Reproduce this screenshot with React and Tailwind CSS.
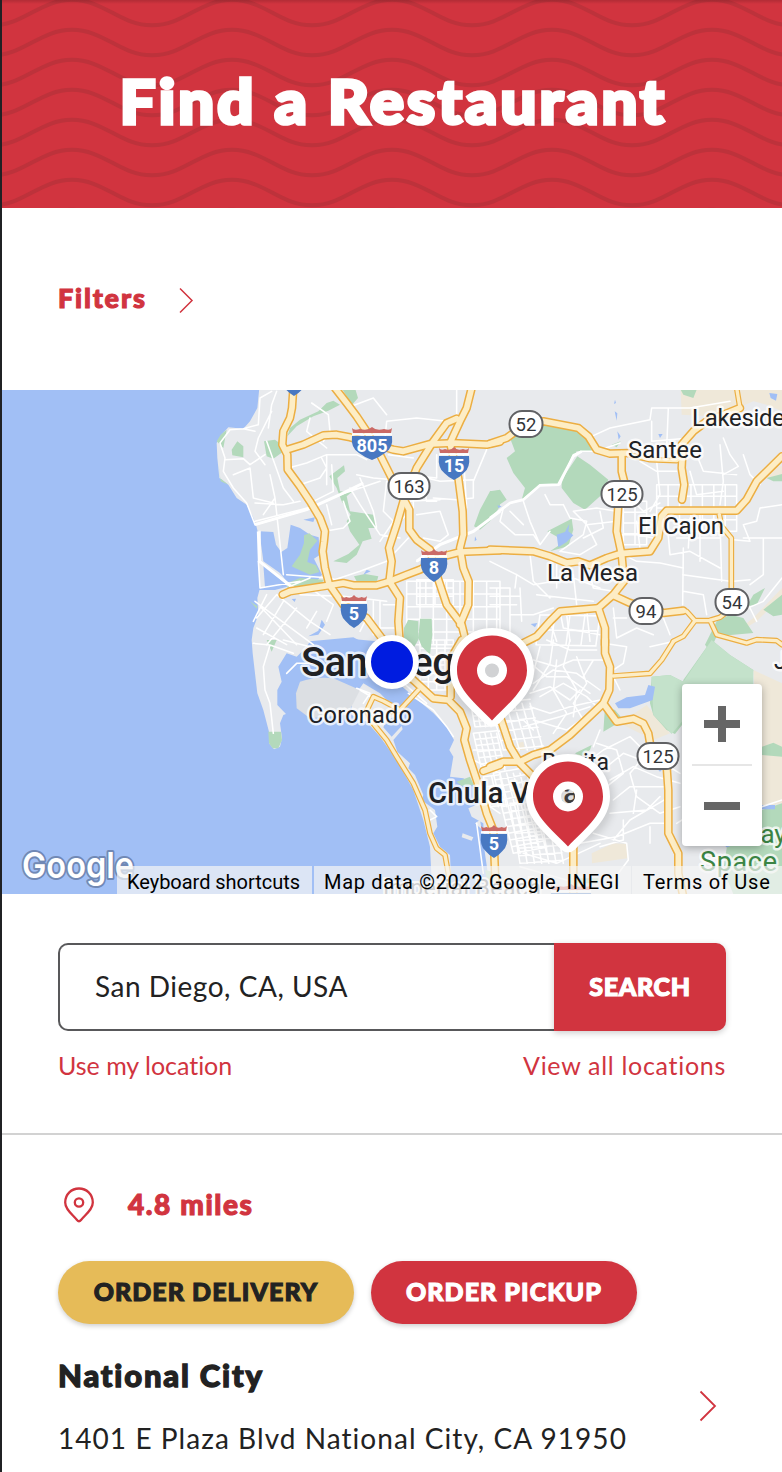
import React from 'react';

// The map is drawn in four quadrants, each one in its own coordinate space.
const Q = {
  A: 'translate(200 388) scale(.33333)',
  B: 'translate(490 388) scale(.33333)',
  C: 'translate(200 640) scale(.33333)',
  D: 'translate(490 640) scale(.33333)',
};

const grid = (x0, y0, x1, y1, nx, ny, skew = 0) => {
  let d = '';
  for (let i = 0; i <= nx; i++) {
    const x = x0 + ((x1 - x0) * i) / nx;
    d += `M${x} ${y0}L${x + skew} ${y1}`;
  }
  for (let j = 0; j <= ny; j++) {
    const y = y0 + ((y1 - y0) * j) / ny;
    const s = (skew * j) / ny;
    d += `M${x0 + s} ${y}L${x1 + s} ${y - skew * 0.3}`;
  }
  return d;
};

const parks = [
  ['A', 'M270 120L300 95 355 70 380 45 400 38 420 50 385 68 340 85 290 115 262 145ZM425 0H465L474 30 455 52ZM95 185L112 160 130 175 130 208 97 202ZM192 160L225 155 262 182 220 212 200 205ZM388 265L432 232 435 250 412 270 420 310 455 312 440 325 450 370 520 380 532 420 505 420 515 452 488 460 470 500 440 525 400 520 445 498 478 470 450 430 440 400 452 380 425 340 410 300ZM870 310L900 308V355L870 400 840 425 822 415 840 365ZM462 565L495 558 535 565 530 582 470 580ZM50 160L62 140 80 125 70 180ZM55 225L62 280 85 290 60 270Z'],
  ['B', 'M60 150L130 108 260 120 300 165 330 190 260 190 205 290 150 290 95 335 105 300 70 255 50 210 75 190ZM215 275L262 205 300 230 355 275 335 320 285 365 250 345 215 300ZM0 310L30 305 50 335 0 370ZM172 430L245 392 250 425 235 475 180 490 225 460ZM572 5H620L610 30 580 20ZM365 170L392 160 380 178ZM830 270L876 258V280L850 280ZM825 600L800 650 770 655 790 620ZM820 665L876 620V680L850 685ZM680 700L720 680 760 690 790 735 680 745 660 790 645 770Z'],
  ['C', 'M205 275H243L246 300 235 325 218 325 207 310ZM770 425L810 410 822 435 785 438ZM855 690L900 700V740H865ZM200 0H230L215 35ZM160 95L170 150 163 110Z'],
  ['D', 'M485 110L540 105 580 125V250L555 282 530 270 490 225 480 190ZM580 120L665 0 720 45 790 90 780 140 580 150ZM816 320L850 308 876 320V350L816 345ZM720 560L816 510 876 490V762H730L700 690ZM345 200L375 210 400 240 340 275ZM255 340L305 315 300 330 270 350ZM240 715H325V730H240Z'],
];
const balboa = [
  ['A', 'M612 720L625 695 655 700 655 755 635 790 612 790ZM660 692H695L697 740 690 800 665 775 655 750Z'],
];
const sand = [
  ['B', 'M572 5H876V70L830 50 790 40 720 70 660 85 575 80ZM820 240L876 235V260L830 270ZM700 760L790 690 876 600V625L800 700Z'],
  ['D', 'M790 90L876 130V490L816 500ZM390 250L470 195 540 280 490 300ZM305 640L370 610 412 612V655L306 670ZM80 310L100 305 105 330 80 330Z'],
];
const water = [
  ['A', 'M178 430L220 432 228 470 244 492 262 480 272 410 300 420 330 440 356 448 360 500 342 512 366 560 350 580 262 582 240 555 190 520ZM190 530L245 568 262 596 225 606 195 598ZM310 395L345 388 340 402ZM155 598H225V606H155ZM365 695L375 710 355 740 325 745 355 728ZM825 445L830 455 824 460ZM500 545L512 550 490 560ZM275 633L288 632 284 642ZM320 780L340 765 450 752 530 760 550 790H320Z'],
  ['B', 'M375 35L378 45 372 48ZM374 70L382 76 380 98ZM382 130L392 145 386 155ZM505 138H518L510 150ZM838 15L862 18 858 38 842 30ZM238 408L235 430 250 442 230 462 205 478 200 440 225 432ZM122 708L142 705 135 718ZM22 352L35 355 26 360Z'],
  ['D', 'M375 190L410 172 465 165 475 135 495 140 488 180 420 205 385 205ZM816 495H855V508H816ZM705 612L720 620 708 622ZM500 385L518 388 510 395Z'],
];

const minor = [
  ['A', 'M130 122L90 125 60 165 75 210 70 250 100 300 140 345 165 410M75 215L130 212 150 230 195 200M165 130L130 122 175 110 180 30 215 10M215 70L175 150 165 190 195 230M230 10L215 50 205 120M335 45L385 80 390 130 370 160M100 260L150 240 160 330 220 345M165 410L320 365 420 320 540 280M165 400L330 358M165 345L250 350 300 340M210 260L225 330 190 380M225 330L250 560M180 430V520L270 595 330 570M175 520L180 600M420 320L470 300M440 60L520 30 560 80M265 240L320 225 380 200 470 200 500 215M300 290L360 270 380 240 365 210M340 340L400 310 395 230M375 430L430 420 450 400 430 340M380 350L395 410M450 300L480 350 540 440 600 450M470 260L520 270 580 275M550 200L560 100 650 90 740 100M560 280L550 370 580 400 540 460M640 260L720 280 820 275M670 280L680 340 710 340M860 185L820 280V330L770 335 700 330M620 340L720 335M650 380L720 370 745 440 720 460 670 450M625 450L560 520 480 550 390 580M650 520L720 470 820 430 900 370M770 0V120M710 200V270L660 265M790 200L800 360M480 270L520 370 530 420M565 200L640 210M380 200V290M330 90L320 130 380 180M200 160L250 300 280 340M640 300V360L600 400M260 560L390 570 480 600M180 600L300 580'],
  ['A', 'M170 690L230 620 330 700 390 740M165 640L340 770M200 620L160 700M250 640L190 740M290 660L200 770M300 620L430 625 560 640M330 600L400 650 380 700M520 640V740M540 640V720L600 720M550 650H600M470 650L500 690 480 730M170 720L260 770M180 655L290 770M350 670L320 720'],
  ['A', grid(620, 580, 900, 770, 7, 5, 0) + grid(650, 575, 760, 650, 4, 3)],
  ['B', 'M0 390L60 345 100 335 150 292 210 290 250 200 275 190 320 190 390 165M305 145L360 120 480 95 485 60 600 60 720 40M485 100V160L600 150M535 60L530 180M500 220L510 320 480 370M450 220L500 250 560 250M600 250L620 320 700 310M700 150L720 200 745 235 700 260M690 170L700 280 690 350M620 200L640 250 740 260M760 200L780 260 810 290M430 340L460 370 510 345M380 370L320 360 250 370 290 410 380 400M220 350L240 390 290 400 280 440 210 490M165 320L180 350 220 350M100 340L120 400 150 470 180 430M40 360L30 400 75 440 130 440 150 470M60 370L100 410M290 410L320 470 270 500 210 490M330 370L340 420 280 450M380 440H440L490 450M440 400L450 480M400 500L440 520 510 525 580 540M530 390L540 500 600 490 690 540M560 450H690M630 380V520M690 390L695 580M600 390L595 480M760 450H876M820 450V560L780 590M876 350L810 360 800 400 760 410 780 460 730 455M730 580L780 575M580 480L578 650M578 560L720 580M580 610L640 620 650 680M0 600H60V760M0 625H90M0 650H80M20 600V760M60 680L130 680 190 660M90 600L95 700M80 560L130 590 250 570 330 600M0 520L80 560 75 600M120 500L130 580 180 630M200 530L200 600M250 560L260 650M140 620L310 640M300 560L310 600 370 610M180 700L200 760M230 680L240 760M210 670L220 720 330 740M290 665L300 760M370 660L380 750 440 720 490 740M370 690H410M520 690L540 740M876 570L820 640 750 670M780 660L800 700'],
  ['B', grid(500, 290, 740, 430, 7, 4) + grid(400, 340, 470, 470, 2, 4) + grid(150, 680, 330, 770, 4, 2, -12)],
  ['C', 'M160 10L210 15 190 80 195 150 210 190 220 280M210 15L280 40M260 100L290 70 340 70M250 0L330 20M470 145L510 160 490 190M480 150L530 180M690 510L710 530 690 540M625 160L700 210 740 260 760 290M600 120L680 190M820 330H900M820 200H900M760 40H830M830 550L850 700M680 60L760 60M640 60V110M820 360L900 400M870 440V500L900 520'],
  ['C', grid(660, 0, 760, 150, 4, 6) + grid(810, 180, 890, 260, 5, 5, 15) + grid(820, 280, 890, 390, 4, 6, 25) + grid(850, 410, 900, 500, 2, 3, 20)],
  ['D', 'M150 20L130 100 90 180M190 0L180 70 130 150M240 0L220 80 260 150 250 230M110 60L170 110 230 110 300 160M120 160L180 140 240 180 270 150M100 260L210 230 300 200M20 250L100 240 130 270'],
  ['D', grid(0, 190, 120, 330, 5, 5, 40) + grid(10, 400, 110, 640, 5, 12, 60) + grid(60, 490, 190, 670, 6, 8, 30)],
  ['D', 'M130 130L190 90 260 100 330 150M150 170L220 130 290 170 320 200M120 200L180 220 240 200 330 180M130 60L200 80 250 60 340 60M170 0L240 30 320 30M200 60L190 150 230 220 190 280M260 50L290 130 250 190 280 240M310 60L280 110M130 240L230 270 300 220M340 10L410 20 400 70 370 90M370 110L390 150M480 20L570 0M300 360L340 330 420 290 470 340 420 400 440 470 510 520 570 500M330 270L310 320M350 380L400 340 480 370M360 420L430 380 500 410 570 430M370 480L420 440 530 440M370 600L420 540 540 470M270 610L380 590 480 550 540 550M400 540V600L330 620M310 580L410 610 415 660 370 720M430 520L440 450M470 340L570 400M480 560V610M360 520L470 510 510 470M320 310L380 330 400 400 350 440M100 640L200 670 330 610M90 680L230 720M816 500L876 480M560 550L576 540'],
];

const highways = [
  ['A', 'M280 0L276 60 270 90 250 130 247 170 262 200 263 245 300 295 330 340 360 390 375 430 372 460 368 490 375 540 388 590 430 650 500 690 545 750 590 800'],
  ['A', 'M405 0L440 45 470 85 500 130 540 200 580 280 612 335 628 365 628 425 650 455 690 485 710 560 740 650 785 710 800 770'],
  ['A', 'M815 0L800 60 780 100 750 165 775 270 788 370 790 440 780 480 790 540 806 580 805 650 780 710'],
  ['A', 'M770 92L740 105 700 160 650 240 610 340 590 410 567 480 575 520 568 580 600 630 595 700 600 770'],
  ['A', 'M262 185L310 170 370 142 410 140 450 148 530 170 580 185 610 190 690 168 760 165 860 170 900 161'],
  ['A', 'M248 620L270 610 388 592 430 585 460 592 530 592 570 580 620 560 660 545 730 505 780 492 900 487'],
  ['B', 'M0 167L50 150 110 106 160 100 265 120 295 145 320 185 360 197 415 195'],
  ['B', 'M395 197L395 250 405 290 385 350 380 430 395 500 402 580 370 620 325 660 345 720V770'],
  ['B', 'M578 180L575 240 583 290 576 335'],
  ['B', 'M575 170L610 130 650 100 700 80 750 60'],
  ['B', 'M0 485L130 490 180 505 230 525 265 520 300 532 350 510 390 497 480 490 505 450 515 385 530 368 740 368 770 335 800 280 876 205'],
  ['B', 'M370 622L420 645 520 675 580 668'],
  ['B', 'M325 660L210 670 180 700 140 745 80 775'],
  ['C', 'M590 80L640 120 700 175 745 180 780 215 800 265 793 300 810 360 840 450 860 520 880 570 888 770'],
  ['C', 'M752 170V110L750 60 785 0'],
  ['C', 'M850 393L900 375'],
  ['D', 'M0 380L40 365 90 365 130 345 180 330 240 285 340 190'],
  ['D', 'M345 0V40L360 80 358 150 340 190 380 245 430 236 460 250 475 280 485 340'],
  ['D', 'M530 380L535 450 535 580 565 640 565 700 580 770'],
  ['D', 'M30 230L60 320 90 370 130 410 200 500 250 590V770'],
];
const arterials = [
  ['B', 'M415 200L480 215 560 218 575 208M750 60L740 0M688 380L695 415 724 450V620'],
  ['B', 'M575 665L590 670 615 698 660 697 690 688 720 665M660 697L680 740 770 765 800 755 860 758 876 770M615 698L580 745 550 760'],
  ['C', 'M655 150L600 210 575 215M600 210L550 183 520 170 500 212 515 245 560 300 590 350 640 430 675 510 690 580 710 625 735 645 745 700V770'],
  ['D', 'M550 5L515 60 480 100 370 108'],
];

const mapLabels = [
  ['Lakeside', 692, 426, 24, 400, 93], ['Santee', 628, 458, 24, 400, 74],
  ['El Cajon', 638, 534, 24, 400, 86], ['La Mesa', 547, 581, 24, 400, 91],
  ['Coronado', 308, 723, 23.5, 400, 104], ['San Diego', 301, 676, 40, 500, 176],
  ['Bonita', 542, 770, 23, 400, 67], ['Chula Vista', 428, 803, 29, 500, 151],
  ['J', 774, 669, 23, 400, null],
];
const ovals = [['52', 526, 424, 33], ['163', 409, 486, 41], ['125', 622, 494, 41], ['94', 646, 611, 33], ['54', 732, 602, 33], ['125', 658, 756, 41]];
const shields = [['', 294, 380, 26], ['805', 372, 444, 40], ['15', 454, 464, 30], ['8', 434, 566, 26], ['5', 354, 612, 26], ['5', 494, 842, 26], ['125', 571, 901, 40]];

const Layer = ({ items, ...rest }) => (
  <g {...rest}>
    {items.map(([q, d], i) => <path key={i} transform={Q[q]} d={d} />)}
  </g>
);

const Shield = ({ t, x, y, w }) => {
  const h = w / 2;
  return (
    <g transform={`translate(${x} ${y})`}>
      <path d={`M${-h + 1}-11L${-h}-16Q${-h + 2}-13 ${-h * 0.6}-15Q${-h * 0.2}-13 0-17Q${h * 0.2}-13 ${h * 0.6}-15Q${h - 2}-13 ${h}-16L${h - 1}-11Z`} fill="#cb6a66" />
      <path d={`M${-h}-8H${h}Q${h + 1.5} 4 ${h * 0.65} 9Q${h * 0.4} 13 0 16Q${-h * 0.4} 13 ${-h * 0.65} 9Q${-h - 1.5} 4 ${-h}-8Z`} fill="#4878c2" />
      <path d={`M${-h} -9.7H${h}`} stroke="#fff" strokeWidth="2.2" />
      <text y="8" textAnchor="middle" fontSize="18" fontWeight="700" fill="#fff">{t}</text>
    </g>
  );
};

const Pin = ({ x, y }) => (
  <g transform={`translate(${x} ${y})`}>
    <circle cy="3" r="40" fill="none" stroke="#000" strokeWidth="10" opacity=".14" filter="url(#soft)" />
    <path fillRule="evenodd" fill="#fff" d="M0-42.500C24-42.500 42-24 42 0C42 23 22 37 7 53Q0 59-7 53C-22 37-42 23-42 0C-42-24-24-42.500 0-42.500ZM0-7A7 7 0 0 0 0 7A7 7 0 0 0 0-7Z" />
    <path fillRule="evenodd" fill="#d1343f" d="M0-35C20-35 35-20 35 0C35 19 16 33 0 50C-16 33-35 19-35 0C-35-20-20-35 0-35ZM0-15A15 15 0 0 0 0 15A15 15 0 0 0 0-15Z" />
    <circle r="7" fill="#8a8a8a" opacity=".25" />
  </g>
);

function RestaurantMap() {
  return (
    <svg className="block h-[504px] w-[780px] font-[Roboto,sans-serif]" viewBox="2 390 780 504" role="img" aria-label="Map of San Diego">
      <defs>
        <filter id="soft" x="-30%" y="-30%" width="160%" height="160%"><feGaussianBlur stdDeviation="4" /></filter>
      </defs>
      <rect x="0" y="388" width="784" height="508" fill="#a1bff5" />
      <path
        transform={Q.A}
        fill="#e8eaed"
        d="M178 0L172 60 150 100 130 122 85 118 65 140 50 165 52 210 58 270 85 290 110 330 140 350 158 385 168 410 178 450 175 520 180 600 172 630 175 680 160 720 155 756 158 796 165 856 172 916 190 966 207 1031 207 1066 222 1084 240 1076 246 1051 240 1006 250 981 258 978 232 951 232 906 245 881 235 836 260 796 290 806 320 776 330 760 460 748 520 780 550 826 600 890 640 925 700 975 740 1016 762 1056 748 1086 760 1106 750 1166 790 1171 830 1196 840 1246 805 1261 815 1286 850 1306 852 1376 862 1446 870 1530H1760V0Z"
      />
      <path transform={Q.C} fill="#e8eaed" d="M455 180L490 130 540 160 575 195 605 222 560 240 550 262 575 290 605 258 608 268 580 300 592 335 630 370 625 385 645 405 670 465 665 480 705 510 712 560 700 580 720 620 750 645 755 762H697L690 620 670 540 640 450 590 360 540 290 500 245 455 225ZM788 580L820 592 815 602 785 592ZM825 550L840 540 845 568Z" />
      <path transform={Q.C} fill="#dcdfe3" d="M300 125Q350 108 400 115L480 150 460 190 440 225 330 235 290 205 288 160Z" />
      <Layer items={sand} fill="#efe8d9" />
      <Layer items={parks} fill="#b3d9bb" />
      <path transform={Q.D} d="M485 110L540 105 580 125 665 0 720 45 790 90V140H580V240L545 282 490 225Z" fill="#c4e2cb" />
      <Layer items={water} fill="#a1bff5" />
      <path transform={Q.A} fill="#b3d9bb" d="M312 442L328 436 352 458 330 485 322 522 348 532 358 552 330 560 285 540 275 535 300 500 312 465ZM262 586L300 570 372 575 360 592 262 600ZM150 640L172 655 170 662Z" />
      <Layer items={minor} fill="none" stroke="#fff" strokeWidth="4.600" strokeLinejoin="round" strokeLinecap="round" />
      <Layer items={balboa} fill="#b3d9bb" />
      <path transform={Q.A} fill="none" stroke="#fff" strokeWidth="9" d="M165 410L320 365 420 320 490 285M175 430L178 520 280 600M650 520L720 470 820 430 900 370" />
      <path transform={Q.B} fill="none" stroke="#fff" strokeWidth="8" d="M0 390L60 345 100 335 150 292 205 290 250 205 275 190" />
      <Layer items={arterials} fill="none" stroke="#ecae42" strokeWidth="17" strokeLinejoin="round" strokeLinecap="round" />
      <Layer items={highways} fill="none" stroke="#ecae42" strokeWidth="26" strokeLinejoin="round" strokeLinecap="round" />
      <Layer items={arterials} fill="none" stroke="#fdedc5" strokeWidth="10" strokeLinejoin="round" strokeLinecap="round" />
      <Layer items={highways} fill="none" stroke="#fdedc5" strokeWidth="17" strokeLinejoin="round" strokeLinecap="round" />
      {shields.map(([t, x, y, w], i) => <Shield key={i} t={t} x={x} y={y} w={w} />)}
      {ovals.map(([t, x, y, w], i) => (
        <g key={i}>
          <rect x={x - w / 2} y={y - 13} width={w} height="26" rx="12.5" fill="#fff" stroke="#606164" strokeWidth="2" />
          <text x={x} y={y + 6.5} textAnchor="middle" fontSize="18.5" fill="#333538">{t}</text>
        </g>
      ))}
      {mapLabels.map(([t, x, y, s, w, len]) => (
        <text key={t} x={x} y={y} fontSize={s} fontWeight={w} textLength={len || undefined} fill="#202124" stroke="#fff" strokeOpacity=".75" strokeWidth="5" strokeLinejoin="round" paintOrder="stroke">{t}</text>
      ))}
      <g fontSize="26" fill="#3b8444" stroke="#fff" strokeOpacity=".75" strokeWidth="5" strokeLinejoin="round" paintOrder="stroke">
        <text x="734" y="843">Otay</text>
        <text x="700" y="871" fontSize="27" textLength="77">Space</text>
      </g>
      <text x="383" y="896" fontSize="23" fill="#74777b" stroke="#fff" strokeWidth="4" paintOrder="stroke" textLength="158">Imperial Beach</text>
      <Pin x={492} y={670.5} />
      <Pin x={568} y={796.5} />
      <circle cx="392" cy="664" r="28" fill="#000" opacity=".16" filter="url(#soft)" />
      <circle cx="392" cy="662" r="24" fill="#001ce0" stroke="#fff" strokeWidth="6" />
      <text x="22" y="878" className="font-[Inter,sans-serif]" fontSize="36" fontWeight="600" fill="#fff" stroke="#7189b5" strokeWidth="4" strokeLinejoin="round" paintOrder="stroke" textLength="112" lengthAdjust="spacingAndGlyphs">Google</text>
    </svg>
  );
}

const Waves = () => (
  <svg className="absolute inset-0 h-full w-full" aria-hidden="true">
    {Array.from({ length: 8 }, (_, i) => (
      <path key={i} transform={`translate(-90 ${i * 30 - 0.2})`} d="M0 0c32 0 48 25.500 80 25.500s48-25.500 80-25.500s48 25.500 80 25.500s48-25.500 80-25.500s48 25.500 80 25.500s48-25.500 80-25.500s48 25.500 80 25.500s48-25.500 80-25.500s48 25.500 80 25.500s48-25.500 80-25.500s48 25.500 80 25.500s48-25.500 80-25.500" fill="none" stroke="#bd323b" strokeWidth="4" />
    ))}
  </svg>
);

export default function App() {
  return (
    <div className="h-[1472px] w-[782px] overflow-hidden border-l-2 border-[#202124] bg-white font-[Lato,sans-serif] text-[#222]">
      <header className="relative flex h-[208px] items-center justify-center overflow-hidden bg-[#d1343f]">
        <Waves />
        <div className="absolute inset-x-0 top-0 h-1 bg-gradient-to-b from-black/15 to-transparent" />
        <h1 className="relative mb-[7px] scale-x-[1.055] whitespace-nowrap pl-[3px] text-[60px] leading-[76px] font-black tracking-[2.9px] text-white [-webkit-text-stroke:3.6px_white] [stroke-linejoin:round]">Find a Restaurant</h1>
      </header>

      <div className="flex h-[182px] items-center gap-[32px] pl-14 text-[#d1343f]">
        <span className="-mt-0.5 text-[27px] leading-8 font-black tracking-[1.85px] [-webkit-text-stroke:1.1px_#d1343f] [stroke-linejoin:round]">Filters</span>
        <svg className="mt-0.5 h-7 w-4" viewBox="0 0 16 28" fill="none" stroke="currentColor" strokeWidth="1.5"><path d="M1 2.500L13 14.500 1 26.500" /></svg>
      </div>

      <section className="relative h-[504px]">
        <RestaurantMap />
        <div className="absolute top-[294px] right-5 flex h-[162px] w-20 flex-col items-center rounded-[4px] bg-white shadow-[0_2px_8px_rgba(0,0,0,0.3)]">
          <button className="flex h-20 items-center" aria-label="Zoom in">
            <svg className="h-9 w-9" viewBox="0 0 36 36"><path d="M0 18H36M18 0V36" stroke="#666" strokeWidth="8" /></svg>
          </button>
          <div className="h-0.5 w-[60px] bg-[#e6e6e6]" />
          <button className="flex h-20 items-center" aria-label="Zoom out">
            <svg className="h-9 w-9" viewBox="0 0 36 36"><path d="M0 18H36" stroke="#666" strokeWidth="8" /></svg>
          </button>
        </div>
        <div className="absolute right-0 bottom-0 flex h-7 w-[665px] gap-0.5 whitespace-nowrap font-[Roboto,sans-serif] text-[20px] leading-8 text-black">
          <span className="w-[195px] bg-[#f5f5f5]/70 pl-2.5 tracking-[-0.03px]">Keyboard shortcuts</span>
          <span className="w-[317px] bg-[#f5f5f5]/70 pl-2.5 tracking-[0.69px]">Map data ©2022 Google, INEGI</span>
          <span className="-ml-px flex-1 bg-[#f5f5f5]/70 pl-[11px] tracking-[0.76px]">Terms of Use</span>
        </div>
      </section>

      <section className="h-[241px] border-b-2 border-[#d2d2d2] px-14 pt-[49px]">
        <div className="flex h-[88px] w-[668px]">
          <div className="flex flex-1 items-center rounded-l-[10px] border-2 border-r-0 border-[#58585a] pb-0.5 pl-[35px] text-[28px] tracking-[0.52px]">San Diego, CA, USA</div>
          <button className="w-[172px] rounded-r-[10px] bg-[#d1343f] pb-px text-[25px] font-black tracking-[0.7px] text-white shadow-[0_2px_6px_rgba(0,0,0,0.2)] [-webkit-text-stroke:1.2px_white] [stroke-linejoin:round]">SEARCH</button>
        </div>
        <div className="mt-[18px] flex w-[668px] justify-between text-[25px] leading-8 text-[#d1343f]">
          <span className="tracking-[-0.02px] [font-variant-ligatures:none]">Use my location</span>
          <span className="tracking-[0.7px]">View all locations</span>
        </div>
      </section>

      <section className="flex flex-col pl-14">
        <div className="mt-[52px] flex h-[36px] items-center pl-1.5 text-[#d1343f]">
          <svg className="h-9 w-[31px]" viewBox="0 0 31 36" fill="none" stroke="currentColor" strokeWidth="2.3"><path d="M15 1.500C7.500 1.500 1.200 7.200 1.200 15.500C1.200 22.500 8 27 13 33Q15 35.500 17 33C22 27 28.800 22.500 28.800 15.500C28.800 7.200 22.500 1.500 15 1.500Z" /><circle cx="15" cy="15.500" r="4.200" /></svg>
          <span className="-mt-[3px] pl-[33px] text-[28px] leading-8 font-black tracking-[1.6px] [-webkit-text-stroke:1.1px_#d1343f] [stroke-linejoin:round]">4.8 miles</span>
        </div>
        <div className="mt-[38px] flex h-[63px] gap-[17px] text-[25px] font-black">
          <button className="w-[296px] rounded-full bg-[#e6bb58] pb-0.5 tracking-[1.07px] whitespace-nowrap shadow-[0_2px_5px_rgba(0,0,0,0.2)] [-webkit-text-stroke:1.1px_#222] [stroke-linejoin:round]">ORDER DELIVERY</button>
          <button className="w-[266px] rounded-full bg-[#d1343f] pb-0.5 tracking-[1.05px] whitespace-nowrap text-white shadow-[0_2px_5px_rgba(0,0,0,0.2)] [-webkit-text-stroke:1.1px_white] [stroke-linejoin:round]">ORDER PICKUP</button>
        </div>
        <div className="flex items-center justify-between pr-[65px]">
          <div className="whitespace-nowrap">
            <h2 className="mt-[31px] text-[31px] leading-[40px] font-black tracking-[1.8px] [-webkit-text-stroke:1.3px_#222] [stroke-linejoin:round]">National City</h2>
            <p className="mt-[23px] text-[28px] leading-[40px] tracking-[1.05px]">1401 E Plaza Blvd National City, CA 91950</p>
          </div>
          <svg className="mt-[30px] h-8 w-[18px] text-[#d1343f]" viewBox="0 0 18 32" fill="none" stroke="currentColor" strokeWidth="1.8"><path d="M1.500 1.500L16 16 1.500 30.500" /></svg>
        </div>
      </section>
    </div>
  );
}
